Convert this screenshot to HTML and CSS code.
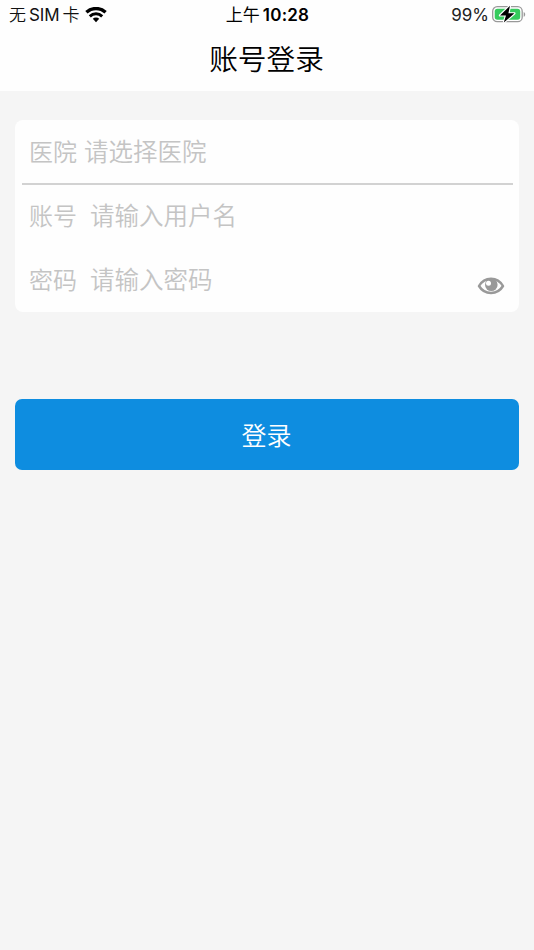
FILE: index.html
```html
<!DOCTYPE html>
<html lang="zh-CN">
<head>
<meta charset="utf-8">
<title>账号登录</title>
<link rel="stylesheet" href="styles.css">
</head>
<body>
<header class="header">
  <div class="status">
    <div class="carrier"><span>无</span><span class="sim">SIM</span><span>卡</span>
      <svg class="wifi" viewBox="0 0 22 16" width="22" height="16"><path d="M1.4 5.3C6.9.2 15.1.2 20.6 5.3" fill="none" stroke="#000" stroke-width="3.3"/><path d="M4.8 9.3C8.4 5.9 13.6 5.9 17.2 9.3" fill="none" stroke="#000" stroke-width="3"/><path d="M11 10.5c-1.3 0-2.4.4-3.2 1.2l3.2 3.5 3.2-3.5c-.8-.8-1.9-1.2-3.2-1.2z"/></svg>
    </div>
    <div class="clock"><span class="ampm">上午</span><span class="time">10:28</span></div>
    <div class="power"><span>99%</span>
      <svg class="battery" viewBox="0 0 35 20" width="35" height="20"><rect x="1.7" y="1.7" width="29.5" height="15" rx="4.5" fill="#fff" stroke="#999" stroke-width="1.3"/><rect x="3.7" y="3.7" width="25.5" height="11" rx="2.7" fill="#35cb5d"/><path d="M32.7 7c2 .8 2 4 0 4.8z" fill="#999"/><path d="M19 .8 9 10.4h6l-2.2 7.2L23.4 8.3h-6z" fill="#000" stroke="#fff" stroke-width="2.2" stroke-linejoin="round" paint-order="stroke"/></svg>
    </div>
  </div>
  <h1 class="title">账号登录</h1>
</header>
<main class="main">
  <section class="card">
    <div class="row hospital"><span class="label">医院</span><span class="hint">请选择医院</span></div>
    <div class="row"><span class="label">账号</span><span class="hint">请输入用户名</span></div>
    <div class="row"><span class="label">密码</span><span class="hint">请输入密码</span>
      <svg class="eye" viewBox="0 0 28 20" width="28" height="20"><path d="M2 10C7.5.2 20.5.2 26 10 20.5 19.2 7.5 19.2 2 10z" fill="none" stroke="#999" stroke-width="2.5" stroke-linejoin="round"/><circle cx="14.3" cy="8.8" r="6.3" fill="#999"/><circle cx="11.5" cy="7.2" r="2.5" fill="#fff"/></svg>
    </div>
  </section>
  <button class="login" type="button">登录</button>
</main>
</body>
</html>
```
FILE: styles.css
```css
* { box-sizing: border-box; }
body {
  margin: 0;
  min-height: 950px;
  background: #f5f5f5;
  color: #000;
  font-family: "Noto Sans CJK SC", sans-serif;
}
.header { height: 91px; background: #fefefe; }
.status {
  display: grid;
  grid-template-columns: 1fr auto 1fr;
  align-items: center;
  height: 30px;
  padding: 0 8px 0 9px;
  font-family: Inter, "Noto Sans CJK SC", sans-serif;
  font-size: 17px;
  line-height: 30px;
}
.carrier, .clock, .power { display: flex; align-items: center; white-space: nowrap; }
.carrier { color: #111; font-weight: 350; }
.sim { margin: 0 3px; font-weight: 400; letter-spacing: -.1px; }
.wifi { margin-left: 5px; }
.ampm { font-weight: 400; }
.time { margin-left: 3px; font-weight: 600; letter-spacing: .2px; }
.power { justify-content: flex-end; color: #222; }
.battery { margin-left: 2px; }
.title {
  margin: 0;
  padding-right: 1px;
  font-size: 28.7px;
  font-weight: 350;
  line-height: 56px;
  text-align: center;
}
.main { padding: 29px 15px 0; }
.card { height: 192px; border-radius: 8px; background: #fefefe; }
.row {
  display: flex;
  align-items: center;
  height: 64px;
  padding: 0 14px 3px;
  color: #c4c4c4;
  font-size: 24.5px;
  font-weight: 350;
}
.hospital {
  height: 65px;
  margin: 0 6px -1px 7px;
  padding: 0 7px 2px;
  border-bottom: 2px solid #d2d2d2;
}
.label { font-size: 24px; margin-right: 13px; }
.hospital .label { margin-right: 7px; }
.eye { margin: 15px 0 0 auto; }
.login {
  display: block;
  width: 100%;
  height: 71px;
  margin-top: 87px;
  padding: 0 1px 1px 0;
  border: 0;
  border-radius: 7px;
  background: #0e8de0;
  color: #fff;
  font: 350 25px/70px "Noto Sans CJK SC", sans-serif;
}
```
